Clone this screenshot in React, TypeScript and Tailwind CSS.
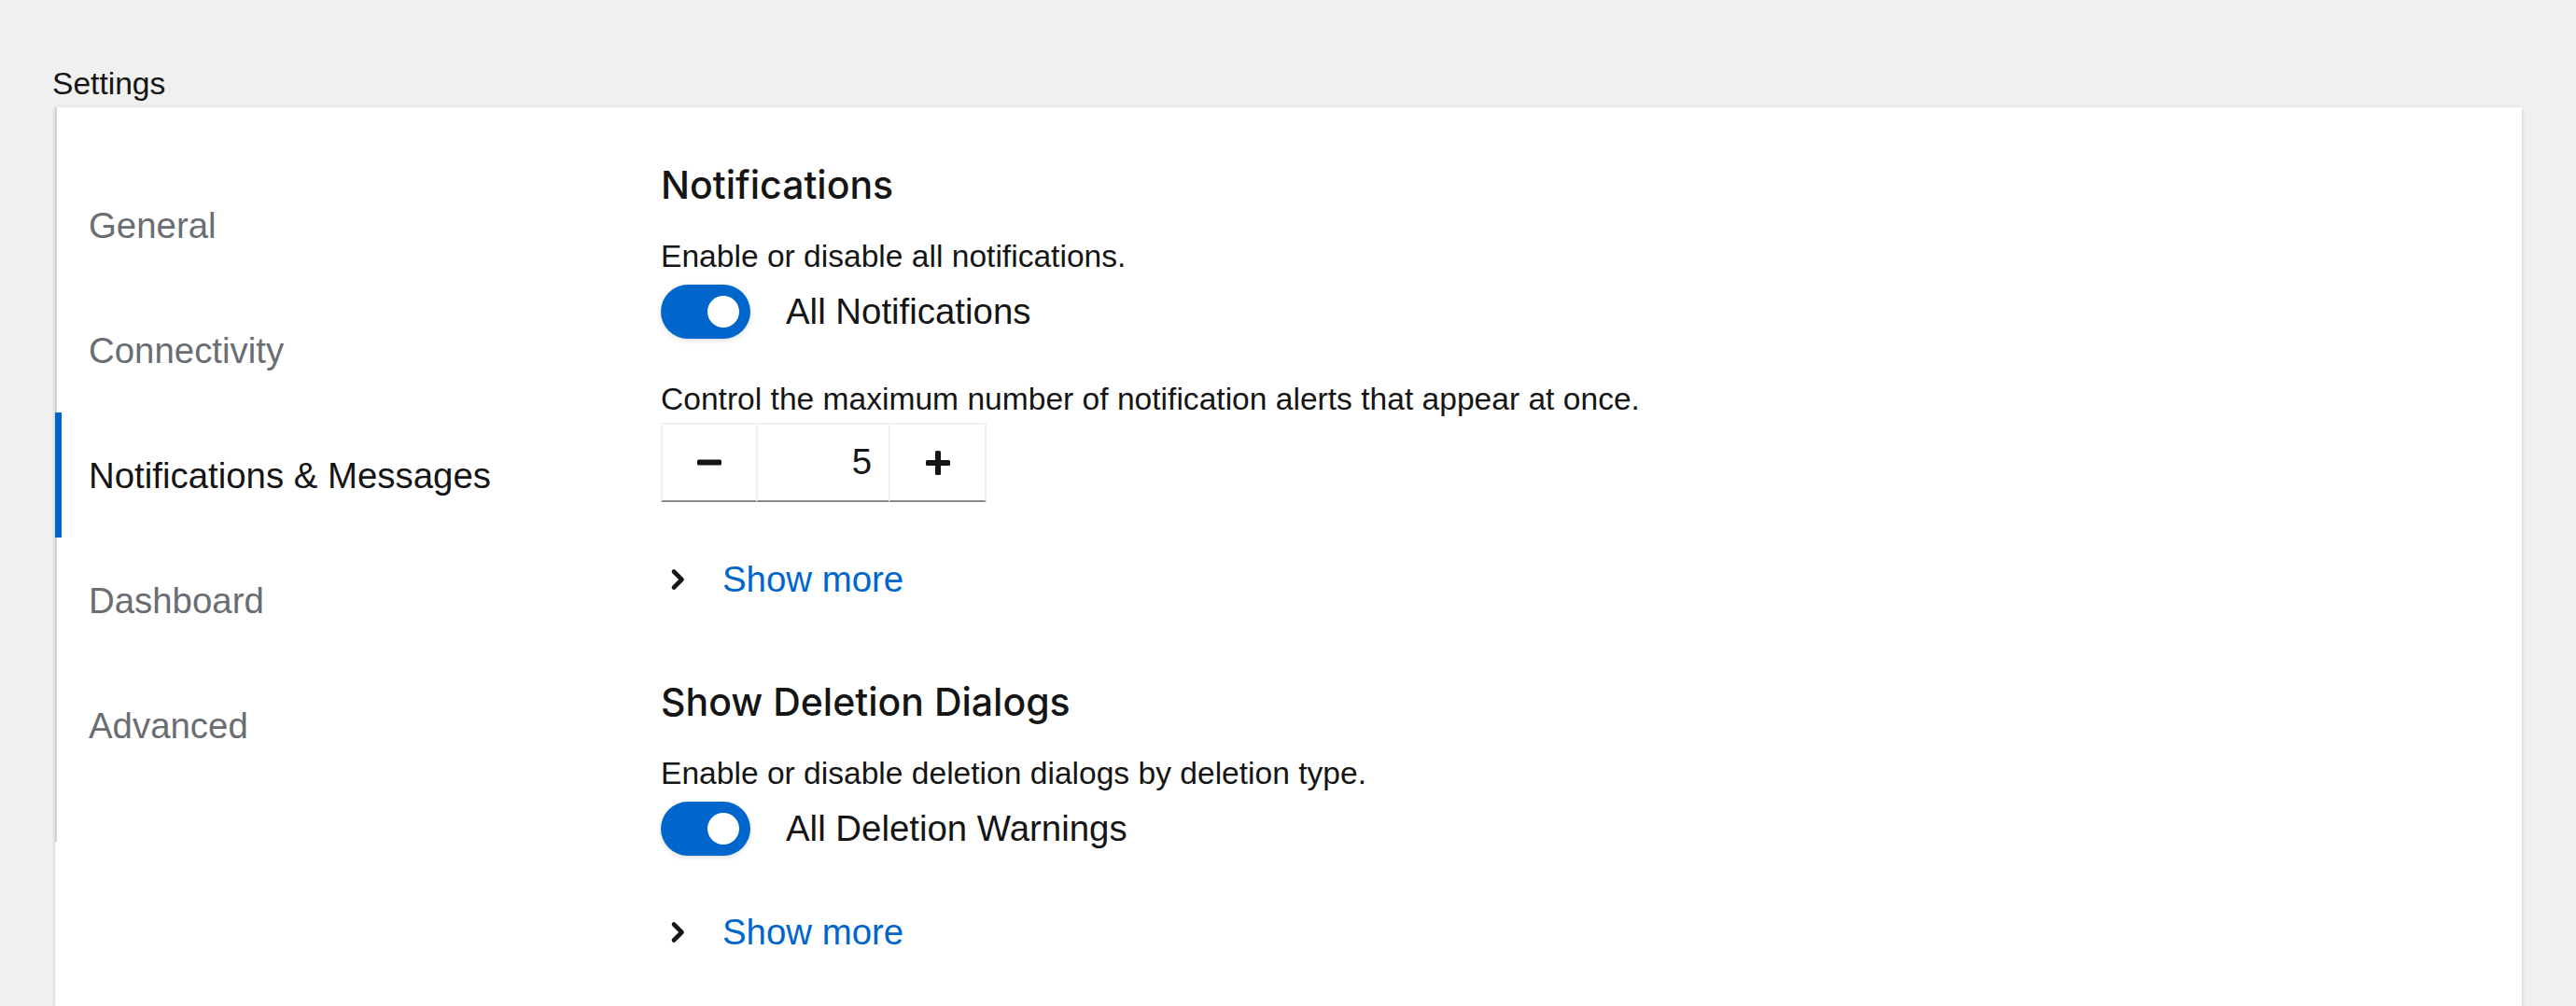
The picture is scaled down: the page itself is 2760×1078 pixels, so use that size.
import { useState } from "react";

interface NavItem {
  label: string
  active?: boolean
}

const navItems: NavItem[] = [
  { label: "General" },
  { label: "Connectivity" },
  { label: "Notifications & Messages", active: true },
  { label: "Dashboard" },
  { label: "Advanced" },
]

function Toggle({ label }: { label: string }) {
  const [on, setOn] = useState(true)
  return (
    <label className="flex h-[58px] items-center cursor-pointer" onClick={() => setOn(!on)}>
      <span
        className={`flex h-[58px] w-[96px] items-center rounded-full pr-[12px] pl-[12px] shadow-[0_2px_5px_rgba(3,3,3,0.12)] ${on ? "justify-end bg-[#0066cc]" : "justify-start bg-[#8a8d90]"}`}
      >
        <span className="size-[34px] rounded-full bg-white" />
      </span>
      <span className="ml-[38px] text-[38.4px] leading-none text-[#151515]">{label}</span>
    </label>
  )
}

function ShowMore() {
  return (
    <button className="flex h-[38px] items-center">
      <svg width="17" height="24" viewBox="0 0 17 24" className="ml-[10px]">
        <polyline points="4,3.5 12.5,12 4,20.5" fill="none" stroke="#151515" strokeWidth="4.6" strokeLinecap="round" strokeLinejoin="round" />
      </svg>
      <span className="ml-[39px] text-[38.4px] leading-none text-[#0066cc]">Show more</span>
    </button>
  )
}

function Stepper() {
  const [value, setValue] = useState(5)
  return (
    <div className="flex h-[85px]">
      <button
        className="flex w-[104px] items-center justify-center border-2 border-[#f0f0f0] border-b-[#8a8d90]"
        onClick={() => setValue(value - 1)}
      >
        <svg width="26" height="7" viewBox="0 0 26 7">
          <rect x="0" y="0.5" width="26" height="6" rx="1.5" fill="#151515" />
        </svg>
      </button>
      <div className="-ml-[2px] flex w-[144px] items-center justify-end border-2 border-[#f0f0f0] border-b-[#8a8d90] pr-[18px] text-[38.4px] leading-none text-[#151515]">
        {value}
      </div>
      <button
        className="-ml-[2px] flex w-[105px] items-center justify-center border-2 border-[#f0f0f0] border-b-[#8a8d90]"
        onClick={() => setValue(value + 1)}
      >
        <svg width="26" height="26" viewBox="0 0 26 26">
          <rect x="10" y="0" width="6" height="26" rx="1.5" fill="#151515" />
          <rect x="0" y="10" width="26" height="6" rx="1.5" fill="#151515" />
        </svg>
      </button>
    </div>
  )
}

export default function App() {
  return (
    <div className="min-h-screen bg-[#f0f0f0] pt-[70px] font-['Liberation_Sans',sans-serif] text-[#151515]">
      <h1 className="pl-[56px] text-[33.6px] leading-[40px]">Settings</h1>
      <div className="mt-[5px] ml-[59px] mr-[58px] flex bg-white shadow-[0_2px_5px_rgba(3,3,3,0.12),0_0_5px_rgba(3,3,3,0.06)]">
        <aside className="w-[592px] shrink-0">
          <nav className="h-[787px] border-l-2 border-[#d2d2d2] pt-[60px] pb-[57px]">
            {navItems.map((item) => (
              <a
                key={item.label}
                className={`relative flex h-[134px] items-center pl-[34px] text-[38.4px] leading-none ${item.active ? "text-[#151515]" : "text-[#6a6e73]"}`}
              >
                {item.active && <span className="absolute top-[-1px] left-[-2px] h-full w-[7px] bg-[#0066cc]" />}
                {item.label}
              </a>
            ))}
          </nav>
        </aside>
        <main className="flex flex-1 flex-col items-start pt-[59px] pb-[60px] pl-[57px]">
          <h2 className="font-['Inter',sans-serif] text-[41px] leading-[48px] font-medium">Notifications</h2>
          <p className="mt-[33px] text-[33.6px] leading-[40px]">Enable or disable all notifications.</p>
          <div className="mt-[10px]">
            <Toggle label="All Notifications" />
          </div>
          <p className="mt-[45px] text-[33.6px] leading-[40px]">
            Control the maximum number of notification alerts that appear at once.
          </p>
          <div className="mt-[5px]">
            <Stepper />
          </div>
          <div className="mt-[64px]">
            <ShowMore />
          </div>
          <h2 className="mt-[88px] font-['Inter',sans-serif] text-[41px] leading-[48px] font-medium">Show Deletion Dialogs</h2>
          <p className="mt-[33px] text-[33.6px] leading-[40px]">Enable or disable deletion dialogs by deletion type.</p>
          <div className="mt-[10px]">
            <Toggle label="All Deletion Warnings" />
          </div>
          <div className="mt-[63px]">
            <ShowMore />
          </div>
        </main>
      </div>
    </div>
  )
}
